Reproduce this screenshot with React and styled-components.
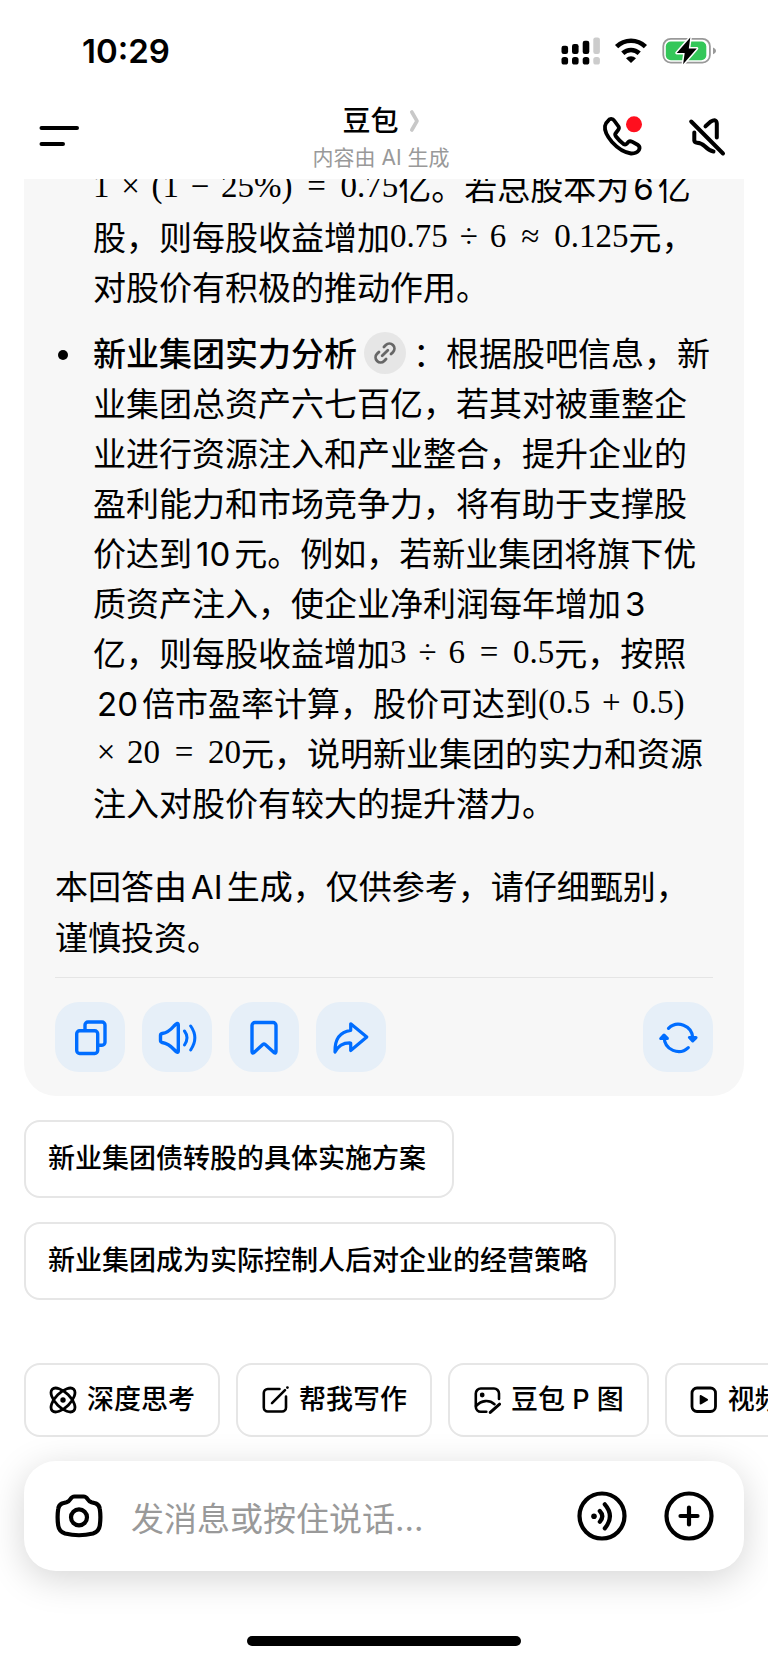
import React from "react";
import styled, { createGlobalStyle } from "styled-components";

const GlobalStyle = createGlobalStyle`
  *, *::before, *::after { box-sizing: border-box; }
  body {
    margin: 0;
    background: #fff;
    color: #000;
    font-family: Inter, "Noto Sans CJK SC", sans-serif;
    overflow-x: hidden;
  }
  button, input { font: inherit; color: inherit; }
`;

const Page = styled.div`
  display: flex;
  flex-direction: column;
  width: 100%;
  overflow: hidden;
`;

const StatusBar = styled.div`
  display: flex;
  align-items: center;
  justify-content: space-between;
  height: 102px;
  padding: 0 51px 0 82px;
`;

const Clock = styled.time`
  font-size: 33px;
  line-height: 40px;
  font-weight: 600;
`;

const StatusIcons = styled.div`
  display: flex;
  align-items: center;
  gap: 13px;
`;

const Header = styled.header`
  display: grid;
  grid-template-columns: 1fr auto 1fr;
  align-items: center;
  height: 77px;
  padding: 0 38px 3px 32px;
`;

const IconButton = styled.button`
  display: flex;
  align-items: center;
  justify-content: center;
  flex: none;
  width: ${(p) => p.$size}px;
  height: ${(p) => p.$size}px;
  padding: 0;
  border: 0;
  background: none;
  cursor: pointer;
`;

const HeaderActions = styled.div`
  display: flex;
  justify-content: flex-end;
  gap: 42px;
  padding-bottom: 6px;
`;

const TitleBlock = styled.div`
  display: flex;
  flex-direction: column;
  align-items: center;
`;

const Title = styled.h1`
  display: flex;
  align-items: center;
  gap: 10px;
  margin: 0;
  font-size: 28px;
  line-height: 38px;
  font-weight: 500;
`;

const Subtitle = styled.p`
  margin: 0;
  font-size: 21px;
  line-height: 36px;
  color: #999;
`;

const Conversation = styled.main`
  overflow: hidden;
`;

const Answer = styled.article`
  margin: 0 24px;
  padding: 0 31px 24px;
  border-radius: 0 0 32px 32px;
  background: #f7f7f7;
  font-size: 33px;
  line-height: 50px;
`;

const Points = styled.ul`
  display: flex;
  flex-direction: column;
  gap: 16px;
  margin: -16px 0 33px;
  padding: 0;
  list-style: none;
`;

const Point = styled.li`
  display: grid;
  grid-template-columns: 38px 1fr;
  white-space: nowrap;

  &::before {
    content: "";
    width: 10px;
    height: 10px;
    margin: 21px 0 0 3px;
    border-radius: 50%;
    background: ${(p) => (p.$continued ? "transparent" : "#000")};
  }
`;

const Lead = styled.strong`
  font-weight: 500;
`;

const SourceLink = styled.a`
  display: inline-flex;
  align-items: center;
  justify-content: center;
  width: 42px;
  height: 42px;
  margin: 3px 7px 0;
  border-radius: 50%;
  background: #e6e6e6;
  color: #666;
  vertical-align: top;
`;

const Num = styled.span`
  margin: 0 4px;
  line-height: 1;
`;

const Formula = styled.span`
  font-family: "Liberation Serif", serif;
  line-height: 1;
  vertical-align: 3px;
`;

const Operator = styled.span`
  display: inline-block;
  width: 26px;
  margin: 0 8px;
  text-align: center;
`;

const LeadingOperator = styled(Operator)`
  margin-left: 0;
`;

const Relation = styled(Operator)`
  margin: 0 11px;
`;

const Disclaimer = styled.p`
  margin: 0 0 13px;
  line-height: 51px;
`;

const Actions = styled.div`
  display: flex;
  gap: 17px;
  padding-top: 24px;
  border-top: 1px solid #e5e5e5;
`;

const ActionButton = styled.button`
  display: flex;
  align-items: center;
  justify-content: center;
  width: 70px;
  height: 70px;
  padding: 0;
  border: 0;
  border-radius: 24px;
  background: #e6eff8;
  color: #006dff;
  margin-left: ${(p) => (p.$end ? "auto" : "0")};
  cursor: pointer;
`;

const Suggestions = styled.div`
  display: flex;
  flex-direction: column;
  align-items: flex-start;
  gap: 24px;
  padding: 24px 24px 63px;
`;

const Chip = styled.button`
  display: flex;
  align-items: center;
  gap: 10px;
  flex: none;
  height: ${(p) => (p.$compact ? 74 : 78)}px;
  padding: ${(p) => (p.$compact ? "0 23px" : "0 26px 0 22px")};
  border: 2px solid #e6e6e6;
  border-radius: 16px;
  background: #fff;
  font-size: 27px;
  line-height: 40px;
  font-weight: 500;
  white-space: nowrap;
  cursor: pointer;
`;

const Tools = styled.nav`
  display: flex;
  gap: 16px;
  padding-left: 24px;
  overflow: hidden;
`;

const Composer = styled.form`
  display: flex;
  align-items: center;
  height: 110px;
  margin: 24px 24px 65px;
  padding: 0 30px 0 31px;
  border-radius: 32px;
  background: #fff;
  box-shadow: 0 8px 36px rgba(0, 0, 0, 0.17);
`;

const MessageInput = styled.input`
  flex: 1;
  min-width: 0;
  height: 60px;
  margin: 0 28px;
  padding: 6px 0 0;
  border: 0;
  outline: 0;
  background: none;
  font-size: 33px;

  &::placeholder { color: #999; opacity: 1; }
`;

const ComposerActions = styled.div`
  display: flex;
  gap: 37px;
`;

const HomeIndicator = styled.div`
  align-self: center;
  width: 274px;
  height: 10px;
  margin-bottom: 17px;
  border-radius: 5px;
  background: #000;
`;

const Icon = ({ w, h = w, stroke = 3, children }) => (
  <svg
    width={w}
    height={h}
    viewBox={`0 0 ${w} ${h}`}
    fill="none"
    stroke="currentColor"
    strokeWidth={stroke}
    strokeLinecap="round"
    strokeLinejoin="round"
    aria-hidden="true"
  >
    {children}
  </svg>
);

const Dot = (props) => <circle fill="currentColor" stroke="none" {...props} />;

const SignalIcon = () => (
  <svg width="40" height="28" viewBox="0 0 40 28" aria-hidden="true">
    {[
      [0.5, 8.7, "#000"],
      [11, 7, "#000"],
      [21.7, 3.8, "#000"],
      [32.3, 0.4, "#ccc"],
    ].map(([x, y, fill]) => (
      <g key={x} fill={fill}>
        <rect x={x} y={y} width="6.6" height={17 - y} rx="2.2" />
        <rect x={x} y="20" width="6.6" height="7.6" rx="2.6" />
      </g>
    ))}
  </svg>
);

const WifiIcon = () => (
  <svg width="34" height="28" viewBox="0 0 34 28" fill="none" stroke="#000" strokeWidth="4.6" aria-hidden="true">
    <path d="M2.6 9.6A20.6 20.6 0 0 1 31.4 9.6" />
    <path d="M8.8 16.2A12 12 0 0 1 25.2 16.2" />
    <path d="M17 26l-5-4.7a7.2 7.2 0 0 1 10 0z" fill="#000" stroke="none" />
  </svg>
);

const BatteryIcon = () => (
  <svg width="56" height="30" viewBox="0 0 56 30" aria-hidden="true">
    <rect x="2.3" y="2.8" width="46.6" height="23.8" rx="7.5" fill="none" stroke="#999" strokeWidth="1.8" />
    <path d="M52 11.5c4 1.6 4 5.2 0 6.8z" fill="#999" />
    <rect x="4.8" y="5.6" width="40.5" height="18.6" rx="5" fill="#34c759" />
    <path
      d="M29.3 1.6L15.7 17h8l-1.6 11.2L35.8 12.4h-8z"
      fill="#000"
      stroke="#fff"
      strokeWidth="3"
      strokeLinejoin="round"
      paintOrder="stroke"
    />
  </svg>
);

const TOOLS = [
  {
    label: "深度思考",
    icon: (
      <Icon w={28} stroke={2.8}>
        <ellipse cx="14" cy="14" rx="15.2" ry="7.4" transform="rotate(45 14 14)" />
        <ellipse cx="14" cy="14" rx="15.2" ry="7.4" transform="rotate(-45 14 14)" />
        <Dot cx="14" cy="14" r="2.7" />
      </Icon>
    ),
  },
  {
    label: "帮我写作",
    icon: (
      <Icon w={28} stroke={2.6}>
        <path d="M18.5 3H6.8a4 4 0 0 0-4 4v14.5a4 4 0 0 0 4 4H21a4 4 0 0 0 4-4V10.5" />
        <path d="M11 17.2L24 4.2" />
        <Dot cx="26.4" cy="1.6" r="1.4" />
      </Icon>
    ),
  },
  {
    label: "豆包 P 图",
    icon: (
      <Icon w={28} stroke={2.6}>
        <path d="M26 13V7.5a5 5 0 0 0-5-5H7.8a5 5 0 0 0-5 5v13.2a5 5 0 0 0 5 5h5.5" />
        <path d="M3 20c5.500-5.800 13-6.600 18.500-1.800" />
        <path d="M17.300 26.400l9.300-8.200" strokeWidth="3" />
        <Dot cx="9.2" cy="9" r="2.4" />
      </Icon>
    ),
  },
  {
    label: "视频生成",
    icon: (
      <Icon w={28} stroke={2.8}>
        <rect x="2" y="2" width="23.5" height="23.5" rx="5" />
        <path d="M10.500 9.800v8l6.800-4z" fill="currentColor" strokeWidth="1.6" />
      </Icon>
    ),
  },
];

export default function App() {
  return (
    <Page>
      <GlobalStyle />
      <StatusBar>
        <Clock>10:29</Clock>
        <StatusIcons>
          <SignalIcon />
          <WifiIcon />
          <BatteryIcon />
        </StatusIcons>
      </StatusBar>

      <Header>
        <IconButton $size={48} type="button" aria-label="菜单">
          <Icon w={48} stroke={4}>
            <path d="M9.5 13H45M9.5 29H31" />
          </Icon>
        </IconButton>
        <TitleBlock>
          <Title>
            豆包
            <Icon w={11} h={24} stroke={3.6}>
              <path d="M2.8 3L8 12L2.800 21" stroke="#c8c8c8" />
            </Icon>
          </Title>
          <Subtitle>内容由 AI 生成</Subtitle>
        </TitleBlock>
        <HeaderActions>
          <IconButton $size={44} type="button" aria-label="语音通话">
            <Icon w={44} stroke={3.8}>
              <path d="M8 7C9.5 4.500 12.500 4 14.500 7L18.500 12.500Q19.500 14 18.200 15.800L15.800 19Q14.500 20.500 16 22.500Q19.500 27 23.500 30Q25.500 31.200 27 29.500L28.500 27.800Q30 26.700 32 27.700L38 31Q40.500 33 39 36Q36.500 39.700 31 39.500Q21 38 12 28Q4 18.500 5 12Q5.500 9 8 7Z" />
              <circle cx="34" cy="10.3" r="8" fill="#ff0f1e" stroke="none" />
            </Icon>
          </IconButton>
          <IconButton $size={44} type="button" aria-label="静音">
            <Icon w={44} stroke={4}>
              <g transform="translate(0 2)">
                <path d="M5.200 5.500L37 37.500" />
                <path d="M19.500 10.300L24.500 5.700Q30.500 2 30.800 7.500V21.500" />
                <path d="M8.300 16.500V24.500Q8.500 26.500 11 26.700Q15.500 27 18.500 30Q23 34.500 27.500 35.500" />
              </g>
            </Icon>
          </IconButton>
        </HeaderActions>
      </Header>

      <Conversation>
        <Answer>
          <Points>
            <Point $continued>
              <div>
                <Formula>
                  1<Operator>×</Operator>(1<Operator>−</Operator>25%)<Relation>=</Relation>0.75
                </Formula>
                亿。若总股本为<Num>6</Num>亿
                <br />
                股，则每股收益增加
                <Formula>
                  0.75<Operator>÷</Operator>6<Relation>≈</Relation>0.125
                </Formula>
                元，
                <br />
                对股价有积极的推动作用。
              </div>
            </Point>
            <Point>
              <div>
                <Lead>新业集团实力分析</Lead>
                <SourceLink href="#source" aria-label="查看来源">
                  <Icon w={24} stroke={2.8}>
                    <g transform="rotate(-45 12 12)">
                      <path d="M8.500 7H5.800a5 5 0 0 0 0 10H8.500" />
                      <path d="M15.500 7H18.200a5 5 0 0 1 0 10H15.500" />
                      <path d="M8 12H16" />
                    </g>
                  </Icon>
                </SourceLink>
                ：根据股吧信息，新
                <br />
                业集团总资产六七百亿，若其对被重整企
                <br />
                业进行资源注入和产业整合，提升企业的
                <br />
                盈利能力和市场竞争力，将有助于支撑股
                <br />
                价达到<Num>10</Num>元。例如，若新业集团将旗下优
                <br />
                质资产注入，使企业净利润每年增加<Num>3</Num>
                <br />
                亿，则每股收益增加
                <Formula>
                  3<Operator>÷</Operator>6<Relation>=</Relation>0.5
                </Formula>
                元，按照
                <br />
                <Num>20</Num>倍市盈率计算，股价可达到
                <Formula>
                  (0.5<Operator>+</Operator>0.5)
                </Formula>
                <br />
                <Formula>
                  <LeadingOperator>×</LeadingOperator>20<Relation>=</Relation>20
                </Formula>
                元，说明新业集团的实力和资源
                <br />
                注入对股价有较大的提升潜力。
              </div>
            </Point>
          </Points>
          <Disclaimer>
            本回答由<Num>AI</Num>生成，仅供参考，请仔细甄别，
            <br />
            谨慎投资。
          </Disclaimer>
          <Actions>
            <ActionButton type="button" aria-label="复制">
              <Icon w={40} stroke={3.4}>
                <rect x="6.7" y="13.7" width="21" height="22.8" rx="3" />
                <path d="M15 12.500V8a3 3 0 0 1 3-3H32a3 3 0 0 1 3 3V25.300a3 3 0 0 1-3 3H29" />
              </Icon>
            </ActionButton>
            <ActionButton type="button" aria-label="朗读">
              <Icon w={40} stroke={3.4}>
                <path d="M3.500 18.500Q3.500 16.800 5.200 16.500Q11.500 15.500 17 9Q21.200 4.500 21.300 8V34Q21.200 37.200 17 32.500Q11.500 26.500 5.200 25.500Q3.500 25 3.500 23.500Z" />
                <path d="M27.500 14Q32.500 20.700 27.500 28M33.700 9Q42 20.700 33.700 33" strokeWidth="3" />
              </Icon>
            </ActionButton>
            <ActionButton type="button" aria-label="收藏">
              <Icon w={40} stroke={3.4}>
                <path d="M8 8.500a3 3 0 0 1 3-3H29a3 3 0 0 1 3 3V34.500Q32 36.800 30 35.500L21.200 27.500Q20 26.500 18.800 27.500L10 35.500Q8 36.800 8 34.500Z" />
              </Icon>
            </ActionButton>
            <ActionButton type="button" aria-label="分享">
              <Icon w={40} stroke={3.2}>
                <path d="M19.700 6.800L35.800 20L19.700 33.500V26Q9 25.500 4 35Q3.500 15.500 19.700 13.500Z" />
              </Icon>
            </ActionButton>
            <ActionButton $end type="button" aria-label="重新生成">
              <Icon w={40} stroke={3.2}>
                <path d="M10.500 11.300A14.300 14.300 0 0 1 34.700 20.500M30.300 30.600A14.300 14.300 0 0 1 6.200 20.500" />
                <path d="M31.500 20.500h6.500l-3.300 3.300zM2.800 21.500h6.500l-3.300-3.300z" fill="currentColor" />
              </Icon>
            </ActionButton>
          </Actions>
        </Answer>
      </Conversation>

      <Suggestions>
        <Chip type="button">新业集团债转股的具体实施方案</Chip>
        <Chip type="button">新业集团成为实际控制人后对企业的经营策略</Chip>
      </Suggestions>

      <Tools>
        {TOOLS.map((tool) => (
          <Chip key={tool.label} $compact type="button">
            {tool.icon}
            {tool.label}
          </Chip>
        ))}
      </Tools>

      <Composer onSubmit={(e) => e.preventDefault()}>
        <IconButton $size={48} type="button" aria-label="拍照">
          <Icon w={48} stroke={4.2}>
            <path d="M19.500 4.500H28.500Q31 4.500 32.500 7T36.500 10.300L41 11.500Q44.300 13 44.800 17Q46 25 44.800 33.500Q44 39.500 38 41.500Q24 45 10 41.500Q4 39.500 3.200 33.500Q2 25 3.200 17Q3.700 13 7 11.500L11.500 10.300Q14 9.500 15.500 7T19.500 4.500Z" />
            <circle cx="24" cy="25.3" r="8" />
          </Icon>
        </IconButton>
        <MessageInput aria-label="消息" placeholder="发消息或按住说话..." />
        <ComposerActions>
          <IconButton $size={50} type="button" aria-label="语音输入">
            <Icon w={50} stroke={4.2}>
              <circle cx="25" cy="25" r="22.5" />
              <Dot cx="17" cy="25.3" r="2.8" />
              <path d="M22.800 20Q27.800 25.200 22.800 30.800M27.800 13.300Q38 25 27.800 37.300" />
            </Icon>
          </IconButton>
          <IconButton $size={50} type="button" aria-label="更多">
            <Icon w={50} stroke={4.2}>
              <circle cx="25" cy="25" r="22.5" />
              <path d="M25 16.500V33.500M16.500 25H33.500" />
            </Icon>
          </IconButton>
        </ComposerActions>
      </Composer>
      <HomeIndicator />
    </Page>
  );
}
